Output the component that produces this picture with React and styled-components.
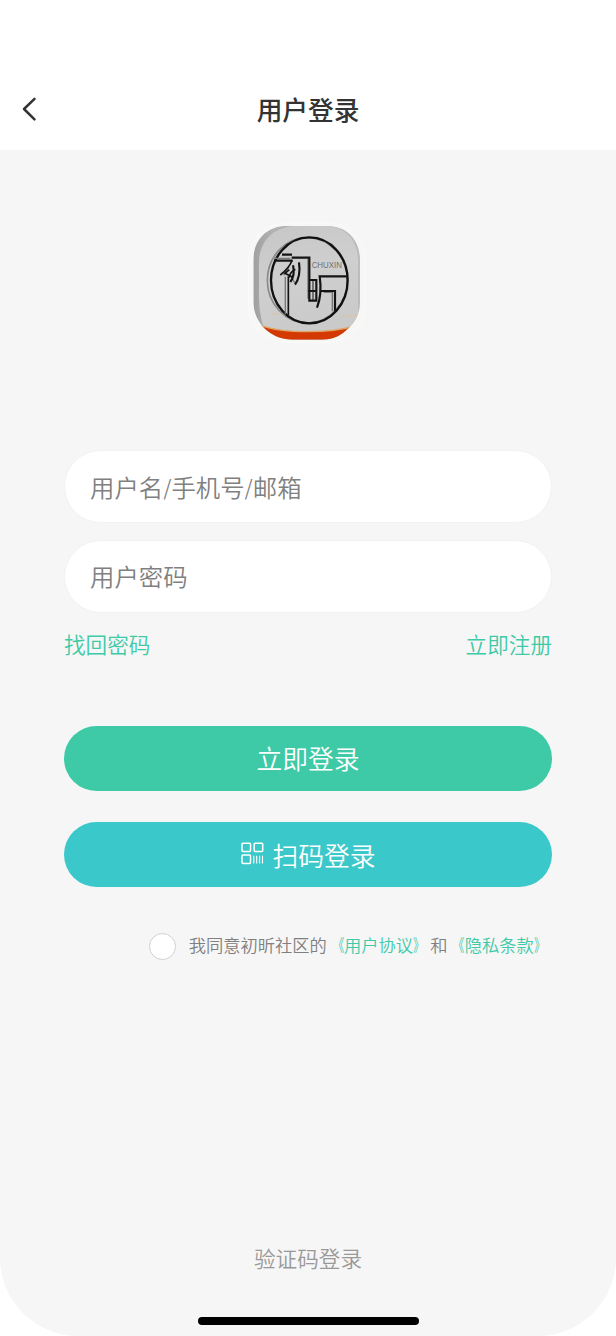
import React from "react";
import styled, { createGlobalStyle } from "styled-components";

const GlobalStyle = createGlobalStyle`
  *, *::before, *::after { box-sizing: border-box; }
  body {
    margin: 0;
    background: #fff;
    font-family: "Noto Sans CJK SC", sans-serif;
    font-weight: 350;
  }
  button, input { font-family: inherit; font-weight: inherit; }
`;

const Screen = styled.div`
  width: 616px;
  height: 1336px;
  display: flex;
  flex-direction: column;
  overflow: hidden;
  background: #fff;
`;

const Header = styled.header`
  flex: none;
  height: 150px;
  padding: 68px 20px 0;
  display: grid;
  grid-template-columns: 20px 1fr 20px;
  align-items: center;
`;

const BackButton = styled.button`
  display: flex;
  padding: 0;
  border: 0;
  background: none;
`;

const Title = styled.h1`
  margin: -1px 0 0;
  text-align: center;
  font-size: 25.7px;
  line-height: 38px;
  font-weight: 500;
  color: #333;
`;

const Content = styled.main`
  flex: 1;
  display: flex;
  flex-direction: column;
  align-items: center;
  padding: 65px 64px 0;
  background: #f6f6f6;
  border-radius: 0 0 78px 78px;
`;

const Logo = styled.svg`
  flex: none;
  width: 130px;
  height: 135px;
  margin-right: 6px;
`;

const Form = styled.form`
  width: 100%;
  margin-top: 100px;
  display: flex;
  flex-direction: column;
`;

const Field = styled.input`
  width: 100%;
  height: 73px;
  margin-bottom: 16.5px;
  padding: 3px 25px 0;
  border: 1px solid #f2f2f2;
  border-radius: 37px;
  background: #fff;
  font-family: "DejaVu Sans", "Noto Sans CJK SC", sans-serif;
  font-size: 24.4px;
  outline: none;
  &::placeholder { color: #808080; opacity: 1; }
`;

const LinkRow = styled.div`
  display: flex;
  justify-content: space-between;
  margin-top: -1px;
  font-size: 21.6px;
  line-height: 32px;
`;

const Link = styled.a`
  color: #3ecaa6;
`;

const Button = styled.button`
  display: flex;
  align-items: center;
  justify-content: center;
  gap: 8px;
  height: 65px;
  margin-top: ${(p) => p.$top}px;
  padding: 0 0 ${(p) => p.$lift || 0}px;
  border: 0;
  border-radius: 33px;
  background: ${(p) => p.$color};
  color: #fff;
  font-size: 25.8px;
`;

const Agreement = styled.div`
  align-self: flex-end;
  display: flex;
  align-items: center;
  margin: 42px 1px 0 0;
  font-size: 17.25px;
  line-height: 26px;
  color: #808080;
`;

const Bracket = styled.span`
  display: inline-block;
  transform: scaleX(0.67);
  transform-origin: ${(p) => (p.$open ? "right" : "left")} center;
`;

const Radio = styled.span`
  width: 27px;
  height: 27px;
  margin: 4px 13px 0 0;
  border: 1px solid #d1d1d1;
  border-radius: 50%;
  background: #fff;
`;

const Footer = styled.footer`
  width: 100%;
  margin-top: auto;
  display: flex;
  flex-direction: column;
  align-items: center;
  padding-bottom: 11px;
`;

const CodeLogin = styled.a`
  font-size: 21.6px;
  line-height: 32px;
  color: #999;
`;

const HomeBar = styled.div`
  width: 221px;
  height: 8px;
  margin-top: 43px;
  border-radius: 4px;
  background: #000;
`;

function BrandLogo() {
  return (
    <Logo viewBox="0 0 390 405">
      <defs>
        <linearGradient id="face" x1="0" y1="0" x2="0.3" y2="1">
          <stop offset="0" stopColor="#c6c6c6" />
          <stop offset="0.5" stopColor="#cfcfcf" />
          <stop offset="1" stopColor="#cacaca" />
        </linearGradient>
        <linearGradient id="side" x1="0" y1="0" x2="1" y2="0">
          <stop offset="0" stopColor="#a09f9f" />
          <stop offset="0.18" stopColor="#b3b2b2" />
          <stop offset="1" stopColor="#bcbcbc" />
        </linearGradient>
        <clipPath id="tile">
          <path d="M140 33H260C322 33 360 75 360 135V262C360 305 338 332 309 354Q283 374 245 374H155Q117 372 91 354C60 332 40 300 40 258V137C40 75 80 33 140 33Z" />
        </clipPath>
      </defs>
      <rect x="25" y="23" width="352" height="359" rx="112" fill="#f7f7f6" stroke="#fafafa" strokeWidth="3" />
      <g clipPath="url(#tile)">
        <rect x="38" y="30" width="324" height="346" fill="url(#side)" />
        <path d="M165 33H260C316 35 353 77 354 135V380H92Q58 330 57 250V140C58 77 102 36 165 33Z" fill="url(#face)" />
        <path d="M62 331Q112 350 205 350Q288 350 345 333V380H62Z" fill="#d53902" />
        <path d="M62 331Q112 350 205 350Q288 350 345 333" fill="none" stroke="#dda567" strokeWidth="4" />
        <path d="M98 297L118 299M303 304L352 301" stroke="#d8c7a4" strokeWidth="4" />
      </g>
      <ellipse cx="202" cy="196" rx="120" ry="128" fill="none" stroke="#8a8a8a" strokeWidth="5" />
      <ellipse cx="208" cy="196" rx="115" ry="129" fill="none" stroke="#101010" strokeWidth="7" />
      <g fill="none" stroke="#777" strokeWidth="4">
        <path d="M103 130H151M131 181L147 155M136 185V298M204 132V251M231 278Q246 234 239 187M251 232H277V289M151 181L164 203" />
      </g>
      <g fill="none" stroke="#141414" strokeWidth="6.5">
        <path d="M126 119H156M102 137H158M155 128H208V257H229V195H208M204 228H229" />
        <path d="M145 184V300M156 136Q149 158 121 180M148 164L135 175L158 187M166 163Q150 171 147 188" strokeWidth="5" />
        <path d="M177 142Q183 183 165 209M159 151Q166 181 151 201" />
        <path d="M320 184H239Q247 238 231 278M244 228H285V291" />
        <path d="M219 196V255" strokeWidth="3" />
      </g>
      <text x="215" y="159" fontFamily="Liberation Sans, sans-serif" fontSize="26" fontWeight="400" textLength="91" lengthAdjust="spacingAndGlyphs" fill="#717171">CHUXIN</text>
    </Logo>
  );
}

const ScanGlyph = styled.svg`
  flex: none;
  width: 24px;
  height: 24px;
  margin-top: -1px;
`;

function ScanIcon() {
  return (
    <ScanGlyph viewBox="0 0 24 24" fill="none" stroke="#fff" strokeWidth="1.5">
      <rect x="2" y="1.2" width="8.5" height="8.4" rx="1" />
      <rect x="14.2" y="1.2" width="8.5" height="8.4" rx="1" />
      <rect x="2" y="13" width="8.5" height="8.4" rx="1" />
      <path d="M13.8 13.8V21.5M16.7 13.8V21.5M19.6 13.8V21.5M22.5 13.8V21.5" strokeWidth="1.1" />
    </ScanGlyph>
  );
}

function PolicyLink({ children }) {
  return (
    <Link>
      <Bracket $open>《</Bracket>
      {children}
      <Bracket>》</Bracket>
    </Link>
  );
}

export default function App() {
  return (
    <>
      <GlobalStyle />
      <Screen>
        <Header>
          <BackButton type="button" aria-label="返回">
            <svg width="20" height="26" viewBox="0 0 20 26" fill="none" stroke="#333" strokeWidth="2.5" strokeLinecap="round" strokeLinejoin="round">
              <path d="M14.5 2.8L4 13L14.5 23.4" />
            </svg>
          </BackButton>
          <Title>用户登录</Title>
        </Header>
        <Content>
          <BrandLogo />
          <Form>
            <Field placeholder="用户名/手机号/邮箱" />
            <Field type="password" placeholder="用户密码" />
            <LinkRow>
              <Link>找回密码</Link>
              <Link>立即注册</Link>
            </LinkRow>
            <Button type="button" $color="#3ecaa6" $top={65.5} $lift={1}>立即登录</Button>
            <Button type="button" $color="#3bc8ca" $top={31.5}>
              <ScanIcon />
              扫码登录
            </Button>
            <Agreement>
              <Radio />
              <span>我同意初昕社区的</span>
              <PolicyLink>用户协议</PolicyLink>
              <span>和</span>
              <PolicyLink>隐私条款</PolicyLink>
            </Agreement>
          </Form>
          <Footer>
            <CodeLogin>验证码登录</CodeLogin>
            <HomeBar />
          </Footer>
        </Content>
      </Screen>
    </>
  );
}
